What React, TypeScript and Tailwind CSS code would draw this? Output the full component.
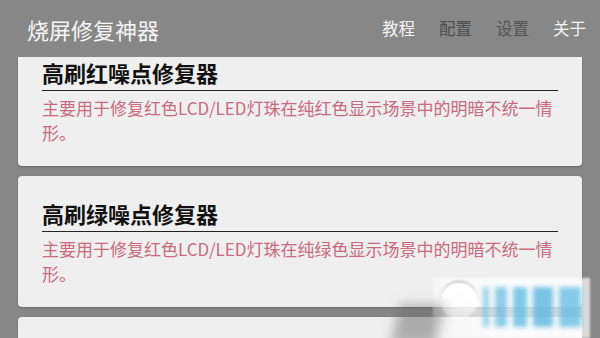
import React from 'react';

const cards = [
  { title: '高刷红噪点修复器', desc: '主要用于修复红色LCD/LED灯珠在纯红色显示场景中的明暗不统一情形。', first: true },
  { title: '高刷绿噪点修复器', desc: '主要用于修复红色LCD/LED灯珠在纯绿色显示场景中的明暗不统一情形。', first: false },
];

const nav = [
  { label: '教程', cls: 'text-[#f4f4f4]' },
  { label: '配置', cls: 'text-[#4d4d4d]' },
  { label: '设置', cls: 'text-[#555555]' },
  { label: '关于', cls: 'text-[#f4f4f4]' },
];

const Card: React.FC<{ title: string; desc: string; first: boolean }> = ({ title, desc, first }) => (
  <div className={`bg-[#efefef] px-6 pb-[21px] shadow-[0_1px_2px_rgba(0,0,0,0.25)] ${first ? 'rounded-b-[4px] pt-[1px]' : 'rounded-[4px] pt-[23px]'}`}>
    <h2 className="text-[22px] leading-[28px] font-bold text-[#111] pb-[4px] border-b border-[#222]">{title}</h2>
    <p className="text-[17px] leading-[25px] text-[#c86a80] pt-[4px]">{desc}</p>
  </div>
);

export default function App() {
  return (
    <div
      className="relative w-[600px] h-[338px] overflow-hidden bg-[#878787] flex flex-col"
      style={{ fontFamily: '"Noto Sans CJK SC", "Noto Sans", sans-serif' }}
    >
      <header className="h-[57px] shrink-0 flex items-center justify-between pl-[27px] pr-[14px] bg-[#878787]">
        <h1 className="text-[22px] text-[#f6f6f6] leading-none">烧屏修复神器</h1>
        <nav className="flex gap-[24px] text-[16.5px] leading-none">
          {nav.map(n => (
            <span key={n.label} className={n.cls}>{n.label}</span>
          ))}
        </nav>
      </header>

      <main className="flex-1 overflow-hidden px-[18px]">
        <div className="flex flex-col gap-[10px]">
          {cards.map(c => (
            <Card key={c.title} title={c.title} desc={c.desc} first={c.first} />
          ))}
          <div className="bg-[#efefef] rounded-[4px] h-[40px] shadow-[0_1px_2px_rgba(0,0,0,0.25)]" />
        </div>
      </main>

      {/* watermark overlay */}
      <div className="absolute left-[433px] top-[278px] w-[157px] h-[60px] bg-gradient-to-r from-white/50 via-white/80 to-white/70 blur-[1px]">
        <div className="absolute left-[7px] top-[3px] w-[38px] h-[38px] rounded-full border-t border-[#8a8a8a] bg-gradient-to-b from-white to-white/40" />
        <div className="absolute left-[50px] top-[9px] flex gap-[6px] blur-[2px]">
          <div className="w-[6px] h-[40px] bg-[#6ec1e4]/70" />
          <div className="w-[12px] h-[40px] bg-[#5fb8e0]/70" />
          <div className="w-[14px] h-[40px] bg-[#62bbe2]/80" />
          <div className="w-[20px] h-[40px] bg-[#5ab5df]/80" />
          <div className="w-[22px] h-[40px] bg-[#67bee3]/80" />
        </div>
      </div>
      <div className="absolute left-[395px] top-[305px] w-[45px] h-[40px] bg-[#6a6a6a]/50 blur-[6px] -skew-x-12" />
    </div>
  );
}
